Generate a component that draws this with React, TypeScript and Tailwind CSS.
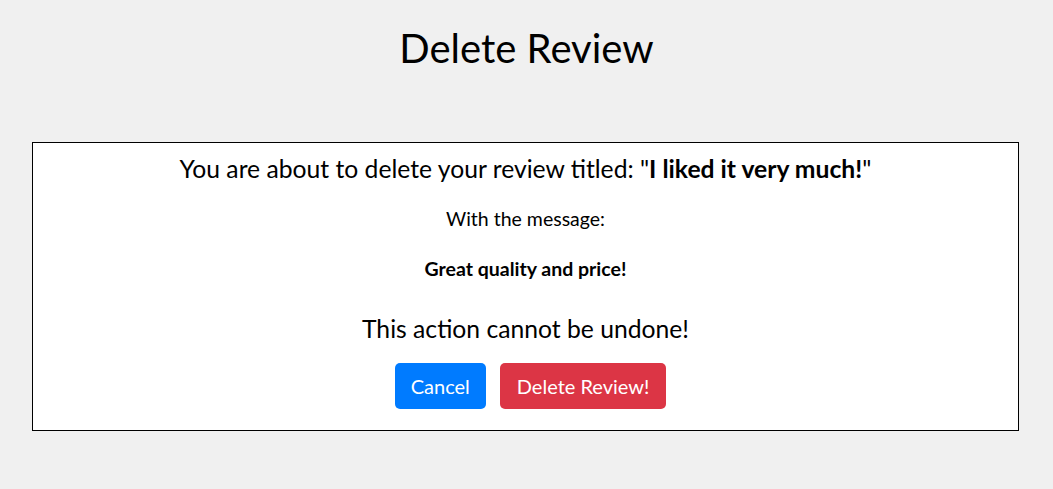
import React from "react"

const review = {
  title: "I liked it very much!",
  message: "Great quality and price!",
}

const DeleteReview = () => {
  return (
    <div className="min-h-[489px] bg-[#f0f0f0] font-['Lato',sans-serif] text-black">
      <h1 className="pt-[24px] text-center text-[40px] leading-[48px]">
        Delete Review
      </h1>
      <div className="mt-[70px] ml-[32px] w-[987px] border border-black bg-white px-4 pt-[11px] pb-[21px] text-center">
        <h4 className="text-[24.7px] leading-[29px]">
          You are about to delete your review titled: "
          <span className="font-bold">{review.title}</span>"
        </h4>
        <p className="mt-[25px] text-[19.5px] leading-[22px]">With the message:</p>
        <p className="mt-[28px] text-[19.5px] leading-[22px] font-bold">
          {review.message}
        </p>
        <p className="mt-[34px] text-[24.7px] leading-[29px]">
          This action cannot be undone!
        </p>
        <div className="mt-[20px] flex justify-center gap-[14px] pl-[10px]">
          <button
            type="button"
            className="h-[46px] rounded-[5px] bg-[#007bff] px-4 text-[20px] text-white"
          >
            Cancel
          </button>
          <button
            type="button"
            className="h-[46px] rounded-[5px] bg-[#dc3545] px-[17px] text-[20px] text-white"
          >
            Delete Review!
          </button>
        </div>
      </div>
    </div>
  )
}

export default function App() {
  return <DeleteReview />
}
